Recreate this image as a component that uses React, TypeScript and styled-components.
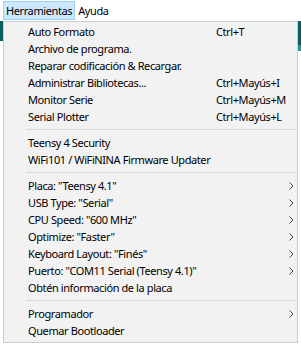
import React from "react";
import styled, { createGlobalStyle } from "styled-components";

const Global = createGlobalStyle`
  html, body { margin: 0; padding: 0; background: #ffffff; }
  body { font-family: "Noto Sans", "Open Sans", sans-serif; font-size: 11px; color: #000; }
  * { box-sizing: border-box; }
`;

const Page = styled.div`
  width: 301px;
  height: 345px;
  display: flex;
  flex-direction: column;
  overflow: hidden;
  background: #fff;
`;

const MenuBar = styled.div`
  height: 21px;
  display: flex;
  align-items: flex-start;
  padding: 1px 0 0 3px;
  background: #fff;
`;

const MenuTitle = styled.div<{ $active?: boolean }>`
  height: 19px;
  display: flex;
  align-items: center;
  padding: 0 2px;
  background: ${(p) => (p.$active ? "#cce8ff" : "transparent")};
  border: 1px solid ${(p) => (p.$active ? "#99d1ff" : "transparent")};
  letter-spacing: -0.4px;
`;

const Body = styled.div`
  flex: 1;
  display: flex;
`;

const Strip = styled.div<{ $w: number }>`
  width: ${(p) => p.$w}px;
  display: flex;
  flex-direction: column;
`;

const StripTeal = styled.div<{ $h: number; $c: string }>`
  height: ${(p) => p.$h}px;
  background: ${(p) => p.$c};
`;

const Dropdown = styled.div`
  flex: 1;
  min-width: 0;
  align-self: flex-start;
  background: #f2f2f2;
  border: 1px solid #cccccc;
  padding: 1px 0 3px 1px;
  display: flex;
  flex-direction: column;
`;

const Item = styled.div`
  height: 17px;
  display: grid;
  grid-template-columns: 23px minmax(0, 1fr) 73px 8px;
  align-items: center;
  white-space: nowrap;
  letter-spacing: -0.4px;
`;

const Label = styled.span`
  grid-column: 2;
  overflow: visible;
`;

const Shortcut = styled.span`
  grid-column: 3;
`;

const Arrow = styled.span`
  grid-column: 4;
  display: flex;
  align-items: center;
`;

const Separator = styled.div`
  height: 9px;
  display: flex;
  align-items: center;
  padding: 0 1px 0 21px;
  &::after {
    content: "";
    flex: 1;
    height: 1px;
    background: #d7d7d7;
  }
`;

type Entry =
  | { kind: "item"; label: string; shortcut?: string; sub?: boolean }
  | { kind: "sep" };

const entries: Entry[] = [
  { kind: "item", label: "Auto Formato", shortcut: "Ctrl+T" },
  { kind: "item", label: "Archivo de programa." },
  { kind: "item", label: "Reparar codificación & Recargar." },
  { kind: "item", label: "Administrar Bibliotecas...", shortcut: "Ctrl+Mayús+I" },
  { kind: "item", label: "Monitor Serie", shortcut: "Ctrl+Mayús+M" },
  { kind: "item", label: "Serial Plotter", shortcut: "Ctrl+Mayús+L" },
  { kind: "sep" },
  { kind: "item", label: "Teensy 4 Security" },
  { kind: "item", label: "WiFi101 / WiFiNINA Firmware Updater" },
  { kind: "sep" },
  { kind: "item", label: 'Placa: "Teensy 4.1"', sub: true },
  { kind: "item", label: 'USB Type: "Serial"', sub: true },
  { kind: "item", label: 'CPU Speed: "600 MHz"', sub: true },
  { kind: "item", label: 'Optimize: "Faster"', sub: true },
  { kind: "item", label: 'Keyboard Layout: "Finés"', sub: true },
  { kind: "item", label: 'Puerto: "COM11 Serial (Teensy 4.1)"', sub: true },
  { kind: "item", label: "Obtén información de la placa" },
  { kind: "sep" },
  { kind: "item", label: "Programador", sub: true },
  { kind: "item", label: "Quemar Bootloader" },
];

const Chevron = () => (
  <svg width="5" height="8" viewBox="0 0 5 8">
    <path d="M0.5 0.5 L4 4 L0.5 7.5" fill="none" stroke="#444" strokeWidth="1" />
  </svg>
);

export default function App() {
  return (
    <Page>
      <Global />
      <MenuBar>
        <MenuTitle $active>Herramientas</MenuTitle>
        <MenuTitle>Ayuda</MenuTitle>
      </MenuBar>
      <Body>
        <Strip $w={3}>
          <StripTeal $h={20} $c="#0b5e5e" />
        </Strip>
        <Dropdown>
          {entries.map((e, i) =>
            e.kind === "sep" ? (
              <Separator key={i} />
            ) : (
              <Item key={i}>
                <Label>{e.label}</Label>
                {e.shortcut && <Shortcut>{e.shortcut}</Shortcut>}
                {e.sub && (
                  <Arrow>
                    <Chevron />
                  </Arrow>
                )}
              </Item>
            )
          )}
        </Dropdown>
        <Strip $w={3}>
          <StripTeal $h={24} $c="#006466" />
          <StripTeal $h={6} $c="#1a9a96" />
        </Strip>
      </Body>
    </Page>
  );
}
